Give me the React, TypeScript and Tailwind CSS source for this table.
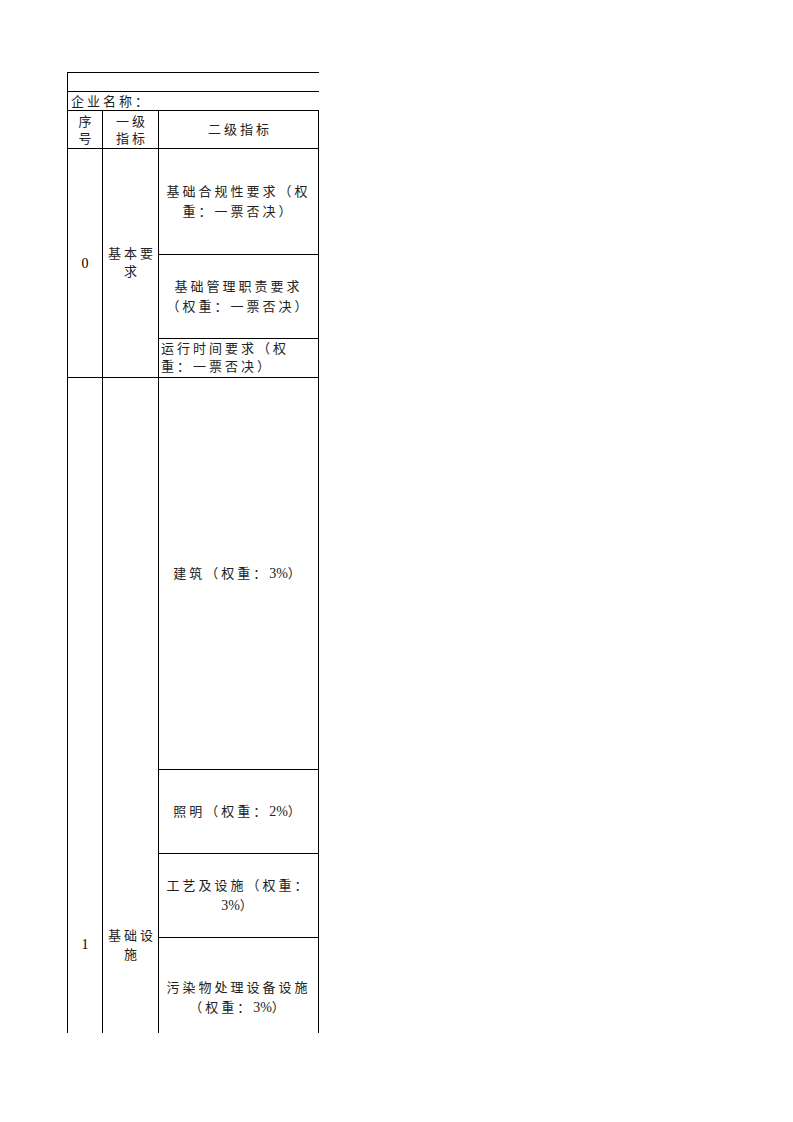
import React from 'react';

const font = "font-['Liberation_Serif','Noto_Sans_CJK_SC',serif]";

interface SubCellProps {
  lines: React.ReactNode[];
  height: string;
  first?: boolean;
  align?: 'center' | 'top';
}

const Pct = ({ v }: { v: string }) => <span className="tracking-normal text-[14px]">{v}</span>;

const SubCell = ({ lines, height, first = false, align = 'center' }: SubCellProps) => {
  const base = `${height} shrink-0 flex flex-col ${first ? '' : 'border-t border-black'}`;
  if (align === 'top') {
    return (
      <div className={`${base} items-start justify-start pl-[2px] pt-[1px] leading-[18px]`}>
        {lines.map((l, i) => (
          <span key={i}>{l}</span>
        ))}
      </div>
    );
  }
  return (
    <div className={`${base} items-center justify-center text-center leading-[20px]`}>
      {lines.map((l, i) => (
        <span key={i}>{l}</span>
      ))}
    </div>
  );
};

const App = () => {
  return (
    <div className={`w-[793px] h-[1122px] bg-white pt-[72px] pl-[67px] text-[13px] tracking-[3px] text-[#222] ${font}`}>
      <div className="w-[252px] h-[961px] overflow-hidden">
        {/* title row */}
        <div className="h-[19px] border-t border-l border-black" />

        {/* company row */}
        <div className="h-[19px] border-t border-l border-black flex items-end pl-[3px] leading-[16px]">
          企业名称：
        </div>

        {/* header */}
        <div className="h-[38px] border-t border-black flex">
          <div className="w-[35px] border-l border-black flex flex-col items-center justify-center leading-[17px] pl-[3px]">
            <span>序</span>
            <span>号</span>
          </div>
          <div className="w-[56px] border-l border-black flex flex-col items-center justify-center leading-[17px] pl-[3px]">
            <span>一级</span>
            <span>指标</span>
          </div>
          <div className="w-[161px] border-l border-r border-black flex items-center justify-center pl-[3px]">
            二级指标
          </div>
        </div>

        {/* 0 基本要求 */}
        <div className="h-[229px] border-t border-black flex">
          <div className="w-[35px] border-l border-black flex items-center justify-center tracking-normal text-[14px] text-black">
            0
          </div>
          <div className="w-[56px] border-l border-black flex flex-col items-center justify-center leading-[18px] pl-[3px]">
            <span>基本要</span>
            <span>求</span>
          </div>
          <div className="w-[161px] border-l border-r border-black flex flex-col">
            <SubCell first height="h-[105px]" lines={['基础合规性要求（权', '重：一票否决）']} />
            <SubCell height="h-[84px]" lines={['基础管理职责要求', '（权重：一票否决）']} />
            <SubCell height="h-[40px]" align="top" lines={['运行时间要求（权', '重：一票否决）']} />
          </div>
        </div>

        {/* 1 基础设施 */}
        <div className="h-[1134px] border-t border-black flex">
          <div className="w-[35px] border-l border-black flex items-center justify-center tracking-normal text-[14px] text-black">
            1
          </div>
          <div className="w-[56px] border-l border-black flex flex-col items-center justify-center leading-[19px] pl-[3px]">
            <span>基础设</span>
            <span>施</span>
          </div>
          <div className="w-[161px] border-l border-r border-black flex flex-col">
            <SubCell first height="h-[391px]" lines={[<>建筑（权重：<Pct v="3%" />）</>]} />
            <SubCell height="h-[84px]" lines={[<>照明（权重：<Pct v="2%" />）</>]} />
            <SubCell height="h-[84px]" lines={['工艺及设施（权重：', <><Pct v="3%" />）</>]} />
            <SubCell height="h-[120px]" lines={['污染物处理设备设施', <>（权重：<Pct v="3%" />）</>]} />
            <div className="flex-1 border-t border-black" />
          </div>
        </div>
      </div>
    </div>
  );
};

export default App;
